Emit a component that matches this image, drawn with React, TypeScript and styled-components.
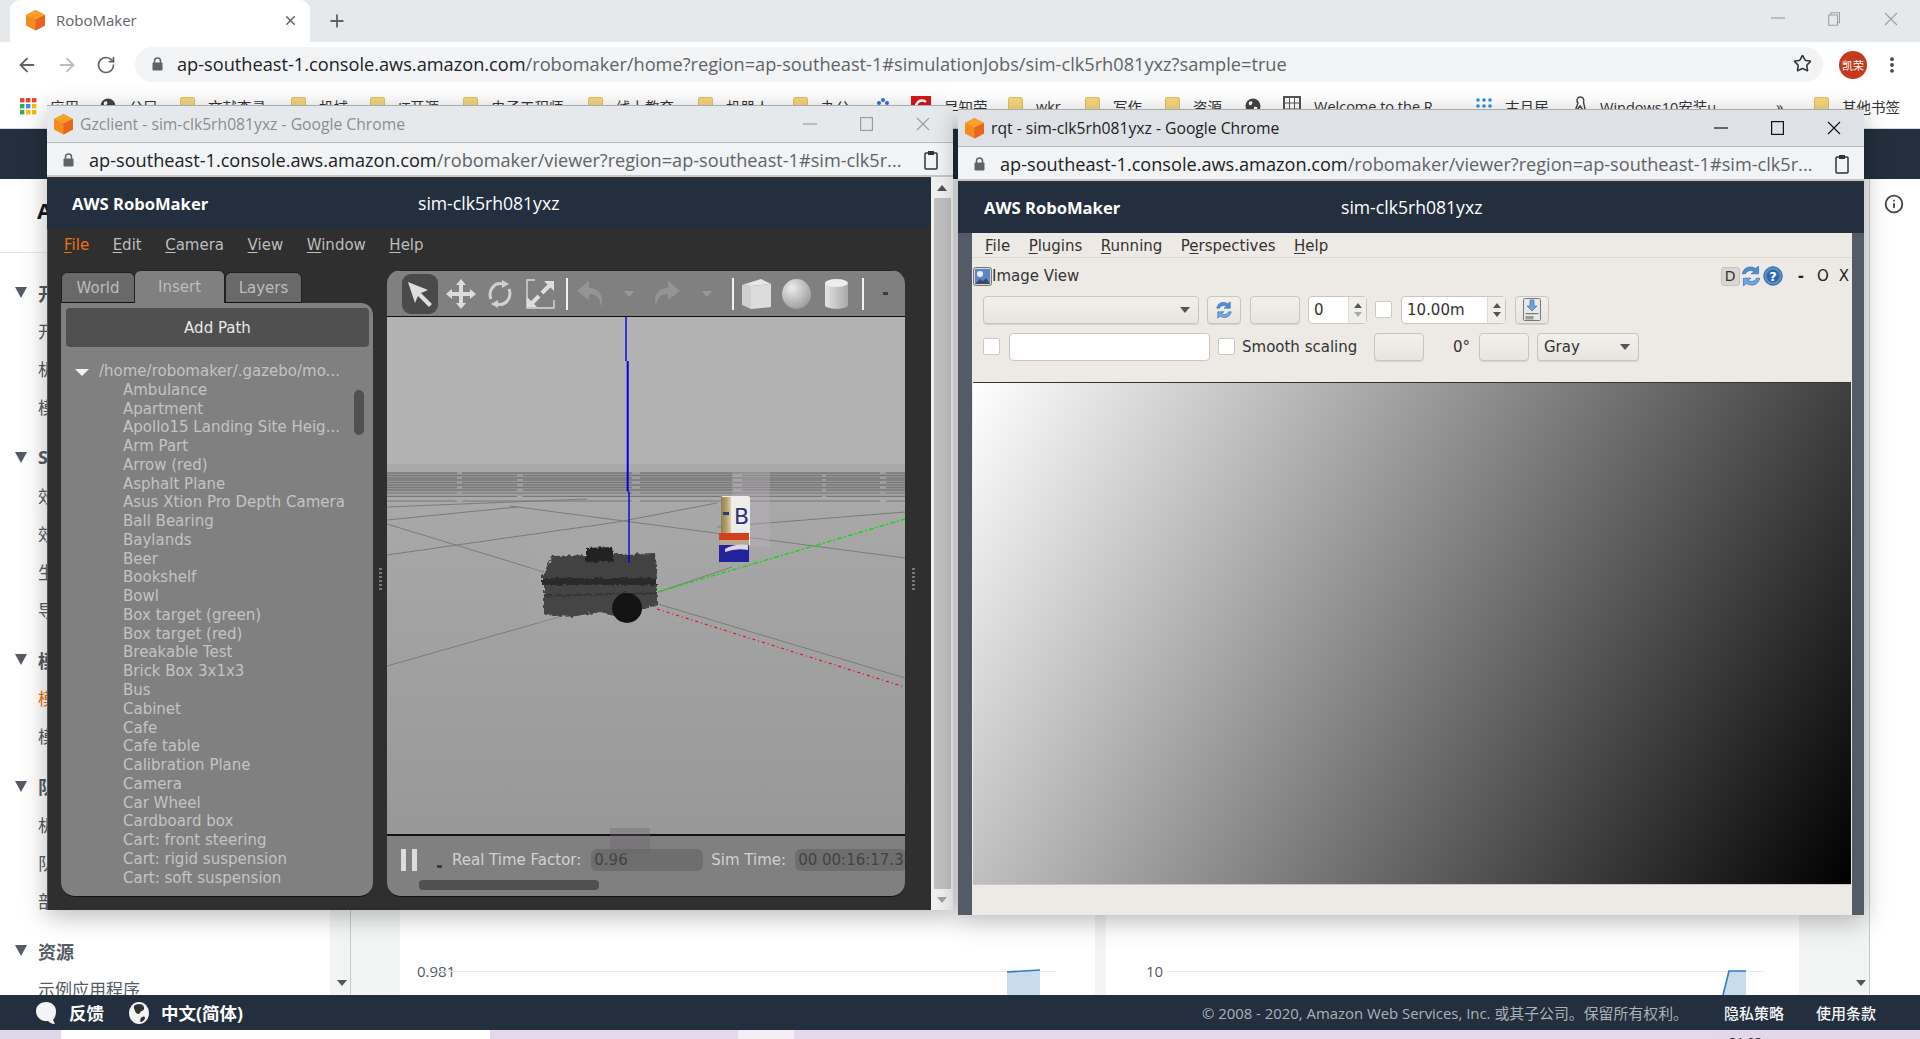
import React from "react";
import styled, { createGlobalStyle } from "styled-components";
import { ArrowLeft, ArrowRight, RotateCw, Star, Plus, X, MoreVertical, Info } from "lucide-react";

const UI = `"Open Sans", "Noto Sans CJK SC", sans-serif`;
const QT = `"DejaVu Sans", sans-serif`;

const Global = createGlobalStyle`
  html, body { margin: 0; padding: 0; background: #fff; overflow: hidden; }
  * { box-sizing: border-box; }
`;

const Screen = styled.div`
  position: relative; width: 1920px; height: 1039px; overflow: hidden;
  display: flex; flex-direction: column; font-family: ${UI};
`;

/* ---------- main browser chrome ---------- */
const TabStrip = styled.div`
  height: 42px; background: #e6e9ec; display: flex; align-items: flex-end; padding-left: 10px; flex: none;
`;
const Tab = styled.div`
  width: 300px; height: 42px; background: #fff; border-radius: 10px 10px 0 0;
  display: flex; align-items: center; padding: 0 12px 2px 15px; gap: 10px;
  font-size: 15px; color: #5f6368;
`;
const TabTitle = styled.span` flex: 1; `;
const NewTab = styled.div`
  width: 38px; height: 42px; margin-left: 8px; display: flex; align-items: center; justify-content: center; color: #5f6368;
`;
const WinControls = styled.div`
  margin-left: auto; height: 42px; display: flex; align-items: flex-start; padding-top: 12px; padding-right: 22px; gap: 43px;
  color: #9aa0a6;
`;
const Toolbar = styled.div`
  height: 45px; flex: none; background: #fff; display: flex; align-items: center; padding-left: 16px; color: #5f6368;
`;
const NavIcon = styled.div<{ $off?: boolean }>`
  width: 40px; display: flex; align-items: center; color: ${p => (p.$off ? "#b8bcc0" : "#5f6368")};
`;
const AddressPill = styled.div`
  margin-left: -1px; width: 1688px; height: 35px; border-radius: 18px; background: #f1f3f4;
  display: flex; align-items: center; padding: 0 0 2px 17px; font-size: 18.2px; color: #5f6368; position: relative;
  white-space: nowrap;
`;
const UrlHost = styled.span` color: #202124; `;
const UrlRest = styled.span` color: #5f6368; margin-left: 0; `;
const UrlBlock = styled.div` margin-left: 14px; flex: 1; `;
const PillStar = styled.div` margin-right: 11px; display: flex; `;
const Avatar = styled.div`
  width: 28px; height: 28px; margin-left: 16px; border-radius: 50%; background: #c5391c; color: #fff;
  display: flex; align-items: center; justify-content: center; font-size: 11px;
`;
const Kebab = styled.div` margin-left: 15px; display: flex; color: #444; `;
const Bookmarks = styled.div`
  height: 42px; flex: none; background: #fff; display: flex; align-items: flex-start; padding: 9px 0 0 20px;
  border-bottom: 1px solid #d9d9d9; font-size: 14.5px; color: #333; overflow: hidden;
`;
const Mark = styled.div<{ $w: number }>`
  width: ${p => p.$w}px; flex: none; display: flex; align-items: center; gap: 13px; white-space: nowrap; height: 20px;
`;

/* ---------- console beneath ---------- */
const NavBand = styled.div` height: 50px; flex: none; background: #232f3e; `;
const ConsoleBody = styled.div` height: 816px; flex: none; display: flex; background: #f2f3f3; overflow: hidden; `;
const Sidebar = styled.div` width: 330px; background: #fff; overflow: hidden; flex: none; `;
const SideHead = styled.div`
  height: 74px; border-bottom: 1px solid #e6e6e6; padding: 16px 0 0 37px; font-size: 22px; font-weight: 700; color: #16191f;
`;
const SideSection = styled.div` padding-top: 20.5px; margin-bottom: -8px; `;
const SideTitle = styled.div`
  height: 38px; display: flex; align-items: center; font-size: 18px; font-weight: 700; color: #545b64; gap: 11px; padding-left: 15px;
`;
const Caret = styled.span`
  width: 0; height: 0; border-left: 6.5px solid transparent; border-right: 6.5px solid transparent; border-top: 11px solid #545b64;
`;
const SideItem = styled.div<{ $on?: boolean }>`
  height: 38px; display: flex; align-items: center; padding-left: 38px; font-size: 17px;
  color: ${p => (p.$on ? "#ec7211" : "#545b64")}; white-space: nowrap;
`;
const Rail = styled.div<{ $w: number }>`
  width: ${p => p.$w}px; flex: none; display: flex; justify-content: flex-end; align-items: flex-end; padding: 0 3px 9px 0;
  border-right: 1px solid #c8ccd0;
`;
const RailArrow = styled.span`
  width: 0; height: 0; border-left: 5px solid transparent; border-right: 5px solid transparent; border-top: 6px solid #555;
`;
const Gap = styled.div<{ $w: number }>` width: ${p => p.$w}px; flex: none; `;
const ChartCard = styled.div<{ $w: number; $pad: number }>`
  width: ${p => p.$w}px; flex: none; background: #fff; display: flex; align-items: flex-end; padding-left: ${p => p.$pad}px;
`;
const ChartRow = styled.div` height: 33px; display: flex; align-items: flex-start; overflow: hidden; `;
const ChartLabel = styled.span<{ $w: number }>`
  width: ${p => p.$w}px; font-size: 15px; line-height: 18px; color: #545b64; flex: none; white-space: nowrap;
`;
const InfoAside = styled.div` flex: 1; background: #fff; display: flex; justify-content: center; padding: 15px 2px 0 0; color: #444; `;

const Footer = styled.div`
  height: 35px; flex: none; background: #232f3e; display: flex; align-items: center; padding: 0 44px 0 35px;
  color: #fff; font-size: 17.5px; font-weight: 700;
`;
const FootLeft = styled.span<{ $gap: number }>` margin-left: ${p => p.$gap}px; display: flex; `;
const Copy = styled.span` margin-left: auto; font-size: 14.9px; font-weight: 400; color: #aab2b8; `;
const FootLink = styled.span<{ $gap: number }>` margin-left: ${p => p.$gap}px; font-size: 15px; font-weight: 500; color: #f6f6f6; `;
const Desktop = styled.div` flex: 1; display: flex; background: #e2d8ea; overflow: hidden; `;
const DeskPiece = styled.div<{ $w: number; $c: string }>` width: ${p => p.$w}px; flex: none; background: ${p => p.$c}; `;
const DeskClock = styled.div` margin: 5px 0 0 18px; font-size: 13px; color: #222; line-height: 14px; `;

/* ---------- popup windows ---------- */
const PopWindow = styled.div<{ $x: number; $y: number; $w: number; $h: number }>`
  position: absolute; left: ${p => p.$x}px; top: ${p => p.$y}px; width: ${p => p.$w}px; height: ${p => p.$h}px;
  display: flex; flex-direction: column; box-shadow: 0 6px 24px rgba(0, 0, 0, 0.28); background: #2f2f2f;
  border-top: 1px solid #a8acb0;
`;
const PopTitle = styled.div<{ $active?: boolean }>`
  height: 37px; flex: none; display: flex; align-items: center; padding-left: 6px; gap: 6px;
  background: ${p => (p.$active ? "#dee1e6" : "#e6e9ec")}; color: ${p => (p.$active ? "#222" : "#8a8d90")};
  font-size: 15.7px; white-space: nowrap;
  border-bottom: 1px solid #b9bcbf;
`;
const PopControls = styled.div<{ $dark?: boolean }>`
  margin-left: auto; display: flex; align-items: center; gap: 43px; padding-right: 23px; color: ${p => (p.$dark ? "#111" : "#9a9da0")};
`;
const PopAddress = styled.div`
  height: 34px; flex: none; background: #f1f3f4; display: flex; align-items: center; padding: 2px 15px 0 16px;
  border-bottom: 2px solid #c4c6c8; font-size: 18.15px; color: #5f6368; white-space: nowrap;
`;
const PopUrl = styled.div` flex: 1; margin-left: 15px; overflow: hidden; `;
const PopHeader = styled.div<{ $pad: number }>`
  height: 50px; flex: none; margin-top: 2px; background: #232f3e; color: #fff; display: flex; align-items: center; padding: 0 0 2px ${p => p.$pad}px;
  font-size: 16.6px; white-space: nowrap;
`;
const HeadBrand = styled.b<{ $w: number }>` width: ${p => p.$w}px; font-weight: 700; `;
const HeadSim = styled.span` font-size: 17.6px; `;

/* gazebo */
const GzFrame = styled.div` flex: 1; display: flex; min-height: 0; `;
const GzMain = styled.div` flex: 1; display: flex; flex-direction: column; min-width: 0; margin-top: 0; `;
const GzContent = styled.div` flex: 1; display: flex; flex-direction: column; background: #2f2f2f; min-height: 0; border-left: 1px solid #555; `;
const GzMenu = styled.div`
  height: 31px; flex: none; display: flex; align-items: center; gap: 23.5px; padding-left: 16px;
  font: 15px ${QT}; color: #bdbdbd;
`;
const MenuEntry = styled.span<{ $hot?: boolean }>` color: ${p => (p.$hot ? "#ec7211" : "inherit")}; `;
const Mn = styled.u` text-underline-offset: 2px; text-decoration-thickness: 1px; `;
const GzPanes = styled.div` display: flex; height: 627px; margin-top: 10px; padding-left: 13px; `;
const LeftPane = styled.div` width: 312px; flex: none; display: flex; flex-direction: column; `;
const TabRow = styled.div` display: flex; height: 33px; align-items: flex-end; flex: none; `;
const GzTab = styled.div<{ $w: number; $on?: boolean }>`
  width: ${p => p.$w}px; height: ${p => (p.$on ? 33 : 31)}px; display: flex; align-items: center; justify-content: center;
  background: ${p => (p.$on ? "#808080" : "#696969")}; border-radius: 6px 6px 0 0;
  border: 1px solid #202020; border-bottom: ${p => (p.$on ? "0" : "1px solid #111")}; border-left-width: ${p => (p.$on ? 0 : 1)}px;
  font: 15px ${QT}; color: #bdbdbd;
`;
const InsertPanel = styled.div`
  position: relative; flex: 1; background: #808080; border-radius: 0 12px 14px 14px; border-bottom: 1px solid #111; padding: 5px 4px 0 5px;
  overflow: hidden; font: 15px ${QT};
`;
const AddPath = styled.div`
  height: 39px; background: #505050; border-radius: 4px; color: #e8e8e8; display: flex; align-items: center; justify-content: center;
`;
const TreeRoot = styled.div`
  margin-top: 15px; height: 18.77px; line-height: 18.77px; padding-left: 9px; display: flex; align-items: center; gap: 10px; color: #c4c4c4;
  white-space: nowrap;
`;
const TreeCaret = styled.span`
  width: 0; height: 0; border-left: 7px solid transparent; border-right: 7px solid transparent; border-top: 7px solid #f2f2f2; margin-top: 3px;
`;
const TreeItem = styled.div` height: 18.77px; line-height: 18.77px; padding-left: 57px; color: #c4c4c4; white-space: nowrap; `;
const TreeThumb = styled.div`
  position: absolute; left: 293px; top: 87px; width: 10px; height: 45px; border-radius: 5px; background: #505050;
`;
const Grip = styled.div<{ $w: number }>`
  width: ${p => p.$w}px; flex: none; display: flex; align-items: center; justify-content: center;
  padding-bottom: 10px;
`;
const GripDots = styled.div`
  width: 3px; height: 22px; background: repeating-linear-gradient(to bottom, #777 0 2px, transparent 2px 4px);
`;
const ViewPane = styled.div`
  position: relative; width: 518px; flex: none; display: flex; flex-direction: column; background: #808080; border-radius: 14px 14px 14px 14px;
  overflow: hidden; border-bottom: 1px solid #111;
`;
const ToolBar3d = styled.div`
  height: 47px; flex: none; display: flex; align-items: center; padding-left: 15px; border-bottom: 1px solid #111; border-top: 1px solid #222;
`;
const Tool = styled.div<{ $ml?: number; $on?: boolean; $w: number }>`
  width: ${p => p.$w}px; height: ${p => (p.$on ? 40 : 30)}px; margin-left: ${p => p.$ml ?? 0}px; flex: none;
  display: flex; align-items: center; justify-content: center;
  background: ${p => (p.$on ? "#4a4a4a" : "transparent")}; border-radius: 9px;
`;
const ToolSep = styled.div<{ $ml: number }>` width: 2px; height: 32px; margin-left: ${p => p.$ml}px; background: #f2f2f2; flex: none; `;
const SceneBox = styled.div` height: 517px; flex: none; display: flex; `;
const TimeBar = styled.div`
  position: relative; flex: 1; border-top: 2px solid #111; display: flex; flex-direction: column; font: 15px ${QT}; color: #d2d2d2;
`;
const TimeRow = styled.div` height: 22px; margin-top: 13px; display: flex; align-items: center; padding-left: 14px; white-space: nowrap; overflow: hidden; `;
const Pause = styled.div`
  width: 16px; height: 22px; flex: none; border-left: 5px solid #dcdcdc; border-right: 5px solid #dcdcdc;
`;
const TinyDot = styled.span` width: 5px; height: 3px; background: #3c3c3c; margin: 12px 10px 0 20px; flex: none; `;
const TinyTool = styled.span` width: 5px; height: 3px; background: #3c3c3c; flex: none; `;
const TimeField = styled.div<{ $w: number; $ml: number }>`
  width: ${p => p.$w}px; height: 22px; flex: none; margin-left: ${p => p.$ml}px; margin-right: 8px; background: #6e6e6e; border-radius: 6px;
  color: #424242; padding-left: 3px; line-height: 22px; overflow: hidden;
`;
const HScroll = styled.div` width: 180px; height: 10px; margin: 9px 0 0 32px; background: #505050; border-radius: 4px; flex: none; `;
const Ghost = styled.div`
  position: absolute; left: 223px; top: -8px; width: 40px; height: 26px; background: rgba(110, 100, 110, 0.35);
`;
const ChromeScroll = styled.div` width: 22px; flex: none; background: #f1f1f1; display: flex; flex-direction: column; align-items: center; `;
const ScrollBtn = styled.div` height: 21px; display: flex; align-items: center; justify-content: center; flex: none; `;
const ScrollThumb = styled.div` flex: 1; width: 17px; background: #c1c1c1; `;
const ArrowUp = styled.span`
  width: 0; height: 0; border-left: 5px solid transparent; border-right: 5px solid transparent; border-bottom: 6px solid #505050;
`;
const ArrowDown = styled.span`
  width: 0; height: 0; border-left: 5px solid transparent; border-right: 5px solid transparent; border-top: 6px solid #a3a3a3;
`;

/* rqt */
const RqtFrame = styled.div` flex: 1; display: flex; padding: 0 12px 0 14px; background: #555b66; min-height: 0; `;
const RqtInner = styled.div` flex: 1; background: #edeae5; display: flex; flex-direction: column; font: 15px ${QT}; color: #333; `;
const RqtMenu = styled.div`
  height: 25px; flex: none; display: flex; align-items: center; gap: 18.5px; padding: 2px 0 0 13px; border-bottom: 1px solid #dcd8d2;
`;
const DockTitle = styled.div` height: 36px; flex: none; display: flex; align-items: center; padding: 0 3px 0 1px; color: #333; `;
const DockLabel = styled.span` margin-left: 0; `;
const DockTools = styled.div` margin-left: auto; display: flex; align-items: center; `;
const DButton = styled.div`
  width: 19px; height: 19px; background: #d9d6d1; border: 1px solid #c5c2bd; border-radius: 3px; display: flex; align-items: center; justify-content: center;
  font-size: 14px;
`;
const DockGlyph = styled.span<{ $ml: number; $bold?: boolean }>` margin-left: ${p => p.$ml}px; font-size: 15px; font-weight: ${p => (p.$bold ? 700 : 400)}; color: #222; `;
const CtlRow = styled.div<{ $mt: number }>` height: 29px; flex: none; margin-top: ${p => p.$mt}px; display: flex; align-items: center; padding-left: 11px; `;
const QtButton = styled.div<{ $w: number; $ml?: number }>`
  width: ${p => p.$w}px; height: 28px; margin-left: ${p => p.$ml ?? 0}px; flex: none; display: flex; align-items: center; justify-content: space-between;
  border: 1px solid #c9c6c0; border-radius: 4px; background: linear-gradient(#f2f0ec, #e8e5e0); padding: 0 8px 0 6px; box-shadow: 0 1px 0 #d5d2cc;
`;
const QtIconBtn = styled(QtButton)` justify-content: center; padding: 0; `;
const ComboCaret = styled.span`
  width: 0; height: 0; border-left: 5px solid transparent; border-right: 5px solid transparent; border-top: 6px solid #555; margin-left: auto;
`;
const SpinBox = styled.div<{ $w: number; $ml: number; $arrow: number }>`
  width: ${p => p.$w}px; height: 28px; margin-left: ${p => p.$ml}px; flex: none; display: grid; grid-template-columns: 1fr ${p => p.$arrow}px;
  border: 1px solid #c9c6c0; border-radius: 4px; background: #fff; align-items: center;
`;
const SpinValue = styled.span` padding-left: 5px; border-right: 1px solid #dedbd6; height: 100%; display: flex; align-items: center; `;
const SpinArrows = styled.div` display: flex; flex-direction: column; align-items: center; gap: 4px; background: #f0eee9; height: 100%; justify-content: center; `;
const SpinUp = styled.span<{ $dim?: boolean }>`
  width: 0; height: 0; border-left: 4.5px solid transparent; border-right: 4.5px solid transparent;
  border-bottom: 5px solid ${p => (p.$dim ? "#999" : "#555")};
`;
const SpinDown = styled.span<{ $dim?: boolean }>`
  width: 0; height: 0; border-left: 4.5px solid transparent; border-right: 4.5px solid transparent;
  border-top: 5px solid ${p => (p.$dim ? "#aaa" : "#555")};
`;
const Check = styled.div<{ $ml?: number }>`
  width: 17px; height: 17px; margin-left: ${p => p.$ml ?? 0}px; flex: none; background: #fff; border: 1px solid #cbc8c2; border-radius: 2px;
`;
const LineInput = styled.div<{ $w: number; $ml: number }>`
  width: ${p => p.$w}px; height: 28px; margin-left: ${p => p.$ml}px; flex: none; background: #fff; border: 1px solid #c9c6c0; border-radius: 4px;
`;
const QtLabel = styled.span<{ $ml: number; $w?: number }>` margin-left: ${p => p.$ml}px; white-space: nowrap; flex: none; ${p => (p.$w ? `width:${p.$w}px;` : "")} `;
const ImageArea = styled.div`
  margin-top: 21px; height: 503px; flex: none; margin-left: 1px; margin-right: 1px; border-top: 1px solid #333;
  background: linear-gradient(120deg, #fff 0%, #000 100%); border-bottom: 1px solid #c9c6c0;
`;

/* ---------- drawings ---------- */
const Cube = () => (
  <svg width="21" height="22" viewBox="0 0 21 22" style={{ flex: "none" }}>
    <polygon points="10.5,1 20,6 20,16.5 10.5,21.5 1,16.5 1,6" fill="#f58a1f" />
    <polygon points="10.5,1 20,6 10.5,10.5 1,6" fill="#f9a02c" />
    <polygon points="10.5,10.5 20,6 20,16.5 10.5,21.5" fill="#e86421" />
  </svg>
);
const Lock = () => (
  <svg width="11" height="14" viewBox="0 0 11 14" style={{ flex: "none" }}>
    <path d="M2.5 6V4a3 3 0 0 1 6 0v2" fill="none" stroke="#5f6368" strokeWidth="1.5" />
    <rect x="0.5" y="5.5" width="10" height="8" rx="1" fill="#5f6368" />
  </svg>
);
const Clip = () => (
  <svg width="14" height="20" viewBox="0 0 14 20" style={{ flex: "none" }}>
    <rect x="1" y="3" width="12" height="16" rx="1" fill="none" stroke="#333" strokeWidth="1.5" />
    <rect x="4" y="1" width="6" height="4" fill="#333" />
  </svg>
);
const WinMin = () => <svg width="14" height="12" viewBox="0 0 14 12"><path d="M0 6h14" stroke="currentColor" strokeWidth="1.2" /></svg>;
const WinMax = () => <svg width="13" height="14" viewBox="0 0 13 14"><rect x=".6" y=".6" width="11.8" height="12.8" fill="none" stroke="currentColor" strokeWidth="1.2" /></svg>;
const WinClose = () => <svg width="14" height="14" viewBox="0 0 14 14"><path d="M1 1l12 12M13 1L1 13" stroke="currentColor" strokeWidth="1.1" /></svg>;
const WinRestore = () => <svg width="13" height="14" viewBox="0 0 13 14"><path d="M3 3V.7h8.5v10H9.5M.7 3h8.8v10.3H.7z" fill="none" stroke="currentColor" strokeWidth="1.1" /></svg>;
const Folder = () => <svg width="15" height="18" viewBox="0 0 15 18" style={{ flex: "none" }}><rect x=".5" y=".5" width="14" height="17" rx="1.5" fill="#f5d77e" stroke="#e0c060" /></svg>;
const Globe = () => <svg width="16" height="16" viewBox="0 0 16 16" style={{ flex: "none" }}><circle cx="8" cy="8" r="7.5" fill="#444" /><path d="M4 4c3-2 4 0 3 2S3 8 4 4zM9 9c3-1 4 0 3 3s-4 2-3-3z" fill="#fff" /></svg>;
const AppsGrid = () => (
  <svg width="17" height="17" viewBox="0 0 17 17" style={{ flex: "none" }}>
    {["#ea4335", "#ea4335", "#ea4335", "#34a853", "#4285f4", "#fbbc05", "#34a853", "#fbbc05", "#fbbc05"].map((c, i) => (
      <rect key={i} x={(i % 3) * 6} y={Math.floor(i / 3) * 6} width="4.4" height="4.4" fill={c} />
    ))}
  </svg>
);
const Paw = () => <svg width="18" height="18" viewBox="0 0 18 18"><g fill="#2f6fdf"><circle cx="5" cy="6" r="2" /><circle cx="13" cy="6" r="2" /><circle cx="9" cy="3" r="2" /><ellipse cx="9" cy="12" rx="5" ry="4" /></g></svg>;
const RedC = () => <svg width="20" height="20" viewBox="0 0 20 20"><rect width="20" height="20" fill="#d8161b" /><path d="M15 6a6 6 0 1 0 0 9" fill="none" stroke="#fff" strokeWidth="2.6" /></svg>;
const DocIcon = () => <svg width="18" height="20" viewBox="0 0 18 20"><rect x="1" y="1" width="16" height="18" fill="#fff" stroke="#555" strokeWidth="2" /><path d="M6.5 1v18M11.5 1v18M1 7h16M1 13h16" stroke="#555" /></svg>;
const DotsIcon = () => <svg width="16" height="18" viewBox="0 0 16 18"><g fill="#2a8fe0">{[2, 8, 14].map(x => [3, 9, 15].map(y => <circle key={`${x}${y}`} cx={x} cy={y} r="1.8" />))}</g></svg>;
const BirdIcon = () => <svg width="15" height="20" viewBox="0 0 15 20"><path d="M8 1a3.5 3.5 0 0 1 3.5 5L14 18 8 10l-6 8 4-11A3.5 3.5 0 0 1 8 1z" fill="none" stroke="#444" strokeWidth="1.4" /></svg>;

const CursorIcon = () => <svg width="28" height="28" viewBox="0 0 28 28"><polygon points="2,2 22,10 15,13 26,24 23,27 12,16 9,23" fill="#dedede" /></svg>;
const MoveIcon = () => (
  <svg width="30" height="30" viewBox="0 0 30 30" fill="#dcdcdc">
    <path d="M15 0l5 6h-3v7h7v-3l6 5-6 5v-3h-7v7h3l-5 6-5-6h3v-7H6v3l-6-5 6-5v3h7V6h-3z" />
  </svg>
);
const RotateIcon = () => (
  <svg width="26" height="30" viewBox="0 0 26 30" fill="none" stroke="#d0d0d0" strokeWidth="3">
    <path d="M4 20A10 11 0 0 1 16 5" />
    <path d="M22 10A10 11 0 0 1 10 25" />
    <polygon points="15,1 22,5 15,9" fill="#d0d0d0" stroke="none" />
    <polygon points="11,21 4,25 11,29" fill="#d0d0d0" stroke="none" />
  </svg>
);
const ScaleIcon = () => (
  <svg width="29" height="30" viewBox="0 0 29 30" fill="none">
    <path d="M9 1H1v28h27V21" stroke="#d8d8d8" strokeWidth="1.4" />
    <path d="M4 26L13 17M16 14L25 5" stroke="#dedede" strokeWidth="4" />
    <polygon points="18,2 28,2 28,12" fill="#dedede" />
    <polygon points="1,18 1,28 11,28" fill="#dedede" />
  </svg>
);
const UndoIcon = ({ flip }: { flip?: boolean }) => (
  <svg width="29" height="28" viewBox="0 0 29 28" style={flip ? { transform: "scaleX(-1)" } : undefined}>
    <path d="M13 1L1 11l12 9v-6c7 0 11 3 12 13 3-10-1-19-12-19z" fill="#959595" />
  </svg>
);
const SmallDrop = () => <svg width="10" height="6" viewBox="0 0 10 6"><polygon points="0,0 10,0 5,6" fill="#9a9a9a" /></svg>;
const BoxIcon = () => (
  <svg width="29" height="30" viewBox="0 0 29 30">
    <polygon points="0,6 9,7 9,30 0,26" fill="#cfcfcf" />
    <polygon points="9,7 29,5 29,28 9,30" fill="#dcdcdc" />
    <polygon points="0,6 19,0 29,5 9,7" fill="#e6e6e6" />
  </svg>
);
const SphereIcon = () => (
  <svg width="29" height="30" viewBox="0 0 29 30">
    <defs><radialGradient id="sph" cx="35%" cy="30%" r="75%"><stop offset="0" stopColor="#ececec" /><stop offset="1" stopColor="#9c9c9c" /></radialGradient></defs>
    <ellipse cx="14.5" cy="15" rx="14.5" ry="15" fill="url(#sph)" />
  </svg>
);
const CylIcon = () => (
  <svg width="23" height="30" viewBox="0 0 23 30">
    <defs><linearGradient id="cyl"><stop offset="0" stopColor="#e4e4e4" /><stop offset="1" stopColor="#a8a8a8" /></linearGradient></defs>
    <path d="M0 4v22c0 5 23 5 23 0V4z" fill="url(#cyl)" />
    <ellipse cx="11.5" cy="4" rx="11.5" ry="4" fill="#ededed" />
  </svg>
);
const Refresh = ({ s = 20 }: { s?: number }) => (
  <svg width={s} height={s + 4} viewBox="0 0 20 24" fill="none">
    <path d="M2 10C3 4 9 2 14 5l3-2v7h-7l3-2C10 6 6 7 5 10z" fill="#4a8fd8" stroke="#2d65ad" strokeWidth=".6" />
    <path d="M18 14c-1 6-7 8-12 5l-3 2v-7h7l-3 2c3 2 7 1 8-2z" fill="#6aa9e6" stroke="#2d65ad" strokeWidth=".6" />
  </svg>
);
const SaveIcon = () => (
  <svg width="18" height="23" viewBox="0 0 18 23">
    <rect x=".5" y=".5" width="17" height="22" rx="1" fill="#e8e8e8" stroke="#777" />
    <path d="M7 2h4v6h3l-5 5-5-5h3z" fill="#6aa4dc" stroke="#2d65ad" strokeWidth=".6" />
    <rect x="2.5" y="15" width="13" height="1.2" fill="#777" />
    <rect x="2.5" y="18" width="8" height="3.5" fill="#9a9a9a" />
  </svg>
);
const ImgIcon = () => (
  <svg width="19" height="19" viewBox="0 0 19 19" style={{ flex: "none" }}>
    <rect x=".5" y=".5" width="18" height="18" rx="2" fill="#d9d6d1" stroke="#777" />
    <rect x="2" y="2" width="15" height="15" fill="#5a88c6" />
    <circle cx="7" cy="7" r="3" fill="#e8eef7" />
    <path d="M2 17l5-5 3 2 3-3 4 6z" fill="#3a4a66" />
  </svg>
);
const HelpIcon = () => (
  <svg width="20" height="20" viewBox="0 0 20 20" style={{ marginLeft: 1 }}>
    <circle cx="10" cy="10" r="9.2" fill="#5a8ec8" stroke="#2c5f9e" />
    <circle cx="10" cy="10" r="6.5" fill="#2f68ad" />
    <text x="10" y="15" textAnchor="middle" fontSize="13" fontWeight="700" fill="#fff" fontFamily="DejaVu Sans">?</text>
  </svg>
);
const Bubble = () => <svg width="22" height="24" viewBox="0 0 22 24"><path d="M11 1c6 0 10 4 10 9 0 4-1 7-3 9l2 4c-3 0-5-1-7-3-7 1-12-4-12-10C1 5 5 1 11 1z" fill="#f4f4f4" /></svg>;
const FootGlobe = () => <svg width="20" height="22" viewBox="0 0 20 22"><ellipse cx="10" cy="11" rx="10" ry="11" fill="#f4f4f4" /><path d="M6 3c4-2 8-1 9 2 1 4-3 3-4 6-1 2-4 1-5-2S4 5 6 3zM12 16c2-2 4-2 4 0s-3 4-4 4-1-3 0-4z" fill="#333" /></svg>;

const Scene = () => {
  const far = [156, 158.5, 161, 163, 165.5, 168, 170.5, 173, 176, 179.5, 184];
  return (
    <svg width="518" height="517" viewBox="0 0 518 517">
      <defs>
        <linearGradient id="ground" x1="0" y1="0" x2="0" y2="1"><stop offset="0" stopColor="#aaaaaa" /><stop offset="1" stopColor="#989898" /></linearGradient>
        <linearGradient id="canTop" x1="0" y1="0" x2="1" y2="0"><stop offset="0" stopColor="#8f7f50" /><stop offset=".6" stopColor="#b8a66e" /><stop offset="1" stopColor="#d9d2b8" /></linearGradient>
        <filter id="rough" x="-10%" y="-10%" width="120%" height="120%">
          <feTurbulence type="fractalNoise" baseFrequency="0.25" numOctaves="2" seed="4" />
          <feDisplacementMap in="SourceGraphic" scale="5" />
        </filter>
        <filter id="soft" x="-10%" y="-10%" width="120%" height="120%">
          <feTurbulence type="fractalNoise" baseFrequency="0.3" numOctaves="1" seed="7" />
          <feDisplacementMap in="SourceGraphic" scale="2" />
        </filter>
      </defs>
      <rect width="518" height="148" fill="#b2b2b2" />
      <rect y="147" width="518" height="370" fill="url(#ground)" />
      <rect y="147" width="518" height="9" fill="#a9a9a9" />
      <rect y="155" width="518" height="24" fill="#9e9e9e" />
      {far.map((y, i) => (
        <line key={y} x1="0" x2="518" y1={y} y2={y} stroke="#787878" strokeWidth={i < 8 ? 1.3 : 1} strokeDasharray={i % 2 ? "130 6 210 9 80 4" : "70 5 170 8 240 6"} />
      ))}
      <g stroke="#7b7b7b" strokeWidth="1" fill="none">
        <path d="M0 207L157 255" />
        <path d="M0 238L231 205L330 186" />
        <path d="M0 349L172 300" />
        <path d="M123 189L518 241" />
        <path d="M0 190L200 182M0 203L130 190" />
        <path d="M271 287L518 361" />
        <path d="M271 275L345 250" />
        <path d="M330 210L518 195" />
      </g>
      <rect x="143" y="231" width="130" height="75" fill="#b0aeb0" opacity=".18" />
      <rect x="345" y="155" width="38" height="75" fill="#bdb5bd" opacity=".3" />
      <line x1="271" y1="275" x2="518" y2="202" stroke="#12d812" strokeWidth="1.4" strokeDasharray="5 2 2 2" />
      <line x1="270" y1="292" x2="518" y2="370" stroke="#e8102a" strokeWidth="1.3" strokeDasharray="3 3 1 3" />
      <g filter="url(#rough)">
        <polygon points="166,239 268,236 270,262 155,264 155,258" fill="#424242" />
        <polygon points="157,268 270,266 270,287 253,294 236,300 213,295 183,300 157,297" fill="#454545" />
        <rect x="155" y="261" width="115" height="7" fill="#2c2c2c" />
        <path d="M157 279L270 276" stroke="#333" strokeWidth="1.5" />
        <polygon points="199,231 225,230 227,244 199,245" fill="#222" />
      </g>
      <ellipse cx="240" cy="291" rx="15" ry="15" fill="#141414" />
      <path d="M239 0V44" stroke="#0000e6" strokeWidth="1.4" />
      <path d="M240.7 44V174.5" stroke="#0000e6" strokeWidth="2" />
      <path d="M242 174.5V246" stroke="#0000e6" strokeWidth="1.4" />
      <g filter="url(#soft)">
        <rect x="334" y="179" width="29" height="50" rx="2" fill="#efecec" />
        <rect x="334" y="180" width="10" height="37" fill="url(#canTop)" />
        <rect x="336" y="195" width="6" height="3" fill="#303a70" />
        <rect x="332" y="216" width="30" height="7" fill="#d4401c" />
        <rect x="333" y="223" width="29" height="5" fill="#b6a890" />
        <rect x="332" y="228" width="30" height="17" fill="#23249a" />
        <path d="M338 232q10 -6 23 -4v5q-12 -2 -23 2z" fill="#d8d8e8" />
      </g>
      <text x="347" y="207" fontSize="22" fontFamily="DejaVu Sans" fill="#2e2e7e">B</text>
    </svg>
  );
};

const ITEMS = [
  "Ambulance", "Apartment", "Apollo15 Landing Site Heig...", "Arm Part", "Arrow (red)", "Asphalt Plane", "Asus Xtion Pro Depth Camera",
  "Ball Bearing", "Baylands", "Beer", "Bookshelf", "Bowl", "Box target (green)", "Box target (red)", "Breakable Test", "Brick Box 3x1x3",
  "Bus", "Cabinet", "Cafe", "Cafe table", "Calibration Plane", "Camera", "Car Wheel", "Cardboard box", "Cart: front steering",
  "Cart: rigid suspension", "Cart: soft suspension",
];

const MARKS: { w: number; icon?: React.ReactNode; text?: string }[] = [
  { w: 80, icon: <AppsGrid />, text: "应用" },
  { w: 80, icon: <Globe />, text: "公民" },
  { w: 111, icon: <Folder />, text: "文献查寻" },
  { w: 79, icon: <Folder />, text: "机械" },
  { w: 93, icon: <Folder />, text: "IT开源" },
  { w: 125, icon: <Folder />, text: "电子工程师" },
  { w: 110, icon: <Folder />, text: "线上教育" },
  { w: 95, icon: <Folder />, text: "机器人" },
  { w: 81, icon: <Folder />, text: "办公" },
  { w: 37, icon: <Paw /> },
  { w: 97, icon: <RedC />, text: "早知荣" },
  { w: 77, icon: <Folder />, text: "wkr" },
  { w: 80, icon: <Folder />, text: "写作" },
  { w: 80, icon: <Folder />, text: "资源" },
  { w: 38, icon: <Globe /> },
  { w: 193, icon: <DocIcon />, text: "Welcome to the R" },
  { w: 96, icon: <DotsIcon />, text: "古月居" },
  { w: 204, icon: <BirdIcon />, text: "Windows10安装u" },
  { w: 38, text: "»" },
  { w: 100, icon: <Folder />, text: "其他书签" },
];

const SECTIONS: { title: string; items: string[]; on?: number }[] = [
  { title: "开发", items: ["开发环境", "机器人应用程序", "模拟应用程序"] },
  { title: "Simulations", items: ["效率模拟作业", "效率模拟批次", "生成世界", "导入作业"] },
  { title: "模拟", items: ["模拟作业", "模拟作业批次"], on: 0 },
  { title: "队组管理", items: ["机器人", "队组", "部署"] },
  { title: "资源", items: ["示例应用程序"] },
];

const Url = ({ path }: { path: string }) => (
  <>
    <UrlHost>ap-southeast-1.console.aws.amazon.com</UrlHost>
    <UrlRest>{path}</UrlRest>
  </>
);

export default function App() {
  return (
    <Screen>
      <Global />
      <TabStrip>
        <Tab>
          <Cube />
          <TabTitle>RoboMaker</TabTitle>
          <X size={15} strokeWidth={2.4} />
        </Tab>
        <NewTab><Plus size={20} strokeWidth={2.2} /></NewTab>
        <WinControls>
          <WinMin />
          <WinRestore />
          <WinClose />
        </WinControls>
      </TabStrip>
      <Toolbar>
        <NavIcon><ArrowLeft size={22} /></NavIcon>
        <NavIcon $off><ArrowRight size={22} /></NavIcon>
        <NavIcon><RotateCw size={20} /></NavIcon>
        <AddressPill>
          <Lock />
          <UrlBlock><Url path="/robomaker/home?region=ap-southeast-1#simulationJobs/sim-clk5rh081yxz?sample=true" /></UrlBlock>
          <PillStar><Star size={19} color="#333" /></PillStar>
        </AddressPill>
        <Avatar>凯荣</Avatar>
        <Kebab><MoreVertical size={20} strokeWidth={2.6} /></Kebab>
      </Toolbar>
      <Bookmarks>
        {MARKS.map((m, i) => (
          <Mark key={i} $w={m.w}>{m.icon}{m.text}</Mark>
        ))}
      </Bookmarks>
      <NavBand />
      <ConsoleBody>
        <Sidebar>
          <SideHead>AWS RoboMaker</SideHead>
          {SECTIONS.map(s => (
            <SideSection key={s.title}>
              <SideTitle><Caret />{s.title}</SideTitle>
              {s.items.map((it, i) => <SideItem key={it} $on={s.on === i}>{it}</SideItem>)}
            </SideSection>
          ))}
        </Sidebar>
        <Rail $w={21}><RailArrow /></Rail>
        <Gap $w={49} />
        <ChartCard $w={695} $pad={17}>
          <ChartRow>
            <ChartLabel $w={23}>0.981</ChartLabel>
            <svg width="616" height="33" viewBox="0 0 616 33">
              <line x1="0" x2="616" y1="9.5" y2="9.5" stroke="#e6e8ea" />
              <polygon points="567,10 600,8 600,33 567,33" fill="#c9dcec" />
              <line x1="567" y1="10" x2="600" y2="8" stroke="#2b7cc0" strokeWidth="1.6" />
            </svg>
          </ChartRow>
        </ChartCard>
        <Gap $w={11} />
        <ChartCard $w={693} $pad={40}>
          <ChartRow>
            <ChartLabel $w={21}>10</ChartLabel>
            <svg width="596" height="33" viewBox="0 0 596 33">
              <line x1="0" x2="596" y1="9.5" y2="9.5" stroke="#e6e8ea" />
              <polygon points="556,33 562,9 579,9 579,33" fill="#c9dcec" />
              <path d="M556 33L562 9H579" fill="none" stroke="#2b7cc0" strokeWidth="1.6" />
            </svg>
          </ChartRow>
        </ChartCard>
        <Rail $w={71}><RailArrow /></Rail>
        <InfoAside><Info size={20} strokeWidth={2.2} /></InfoAside>
      </ConsoleBody>
      <Footer>
        <Bubble />
        <FootLeft $gap={12}>反馈</FootLeft>
        <FootLeft $gap={25}><FootGlobe /></FootLeft>
        <FootLeft $gap={12}>中文(简体)</FootLeft>
        <Copy>© 2008 - 2020, Amazon Web Services, Inc. 或其子公司。保留所有权利。</Copy>
        <FootLink $gap={36}>隐私策略</FootLink>
        <FootLink $gap={32}>使用条款</FootLink>
      </Footer>
      <Desktop>
        <DeskPiece $w={61} $c="#dcd7e9" />
        <DeskPiece $w={429} $c="#ffffff" />
        <DeskPiece $w={248} $c="#e5d8ec" />
        <DeskPiece $w={56} $c="#f3eef6" />
        <DeskPiece $w={917} $c="#e4d8ea" />
        <DeskClock>21:03</DeskClock>
      </Desktop>

      <PopWindow $x={47} $y={105} $w={906} $h={805}>
        <PopTitle>
          <Cube />
          Gzclient - sim-clk5rh081yxz - Google Chrome
          <PopControls><WinMin /><WinMax /><WinClose /></PopControls>
        </PopTitle>
        <PopAddress>
          <Lock />
          <PopUrl><Url path="/robomaker/viewer?region=ap-southeast-1#sim-clk5r..." /></PopUrl>
          <Clip />
        </PopAddress>
        <GzFrame>
          <GzMain>
            <PopHeader $pad={25}>
              <HeadBrand $w={346}>AWS RoboMaker</HeadBrand>
              <HeadSim>sim-clk5rh081yxz</HeadSim>
            </PopHeader>
            <GzContent>
              <GzMenu>
                <MenuEntry $hot><Mn>F</Mn>ile</MenuEntry>
                <MenuEntry><Mn>E</Mn>dit</MenuEntry>
                <MenuEntry><Mn>C</Mn>amera</MenuEntry>
                <MenuEntry><Mn>V</Mn>iew</MenuEntry>
                <MenuEntry><Mn>W</Mn>indow</MenuEntry>
                <MenuEntry><Mn>H</Mn>elp</MenuEntry>
              </GzMenu>
              <GzPanes>
                <LeftPane>
                  <TabRow>
                    <GzTab $w={74}>World</GzTab>
                    <GzTab $w={90} $on>Insert</GzTab>
                    <GzTab $w={77}>Layers</GzTab>
                  </TabRow>
                  <InsertPanel>
                    <AddPath>Add Path</AddPath>
                    <TreeRoot><TreeCaret />/home/robomaker/.gazebo/mo...</TreeRoot>
                    {ITEMS.map(it => <TreeItem key={it}>{it}</TreeItem>)}
                    <TreeThumb />
                  </InsertPanel>
                </LeftPane>
                <Grip $w={14}><GripDots /></Grip>
                <ViewPane>
                  <ToolBar3d>
                    <Tool $w={36} $on><CursorIcon /></Tool>
                    <Tool $w={30} $ml={8}><MoveIcon /></Tool>
                    <Tool $w={26} $ml={11}><RotateIcon /></Tool>
                    <Tool $w={29} $ml={13}><ScaleIcon /></Tool>
                    <ToolSep $ml={11} />
                    <Tool $w={29} $ml={8}><UndoIcon /></Tool>
                    <Tool $w={10} $ml={19}><SmallDrop /></Tool>
                    <Tool $w={29} $ml={18}><UndoIcon flip /></Tool>
                    <Tool $w={10} $ml={21}><SmallDrop /></Tool>
                    <ToolSep $ml={20} />
                    <Tool $w={29} $ml={8}><BoxIcon /></Tool>
                    <Tool $w={29} $ml={11}><SphereIcon /></Tool>
                    <Tool $w={23} $ml={14}><CylIcon /></Tool>
                    <ToolSep $ml={14} />
                    <Tool $w={5} $ml={19}><TinyTool /></Tool>
                  </ToolBar3d>
                  <SceneBox><Scene /></SceneBox>
                  <TimeBar>
                    <Ghost />
                    <TimeRow>
                      <Pause />
                      <TinyDot />
                      Real Time Factor:
                      <TimeField $w={112} $ml={10}>0.96</TimeField>
                      Sim Time:
                      <TimeField $w={112} $ml={9}>00 00:16:17.3</TimeField>
                    </TimeRow>
                    <HScroll />
                  </TimeBar>
                </ViewPane>
                <Grip $w={16}><GripDots /></Grip>
              </GzPanes>
            </GzContent>
          </GzMain>
          <ChromeScroll>
            <ScrollBtn><ArrowUp /></ScrollBtn>
            <ScrollThumb />
            <ScrollBtn><ArrowDown /></ScrollBtn>
          </ChromeScroll>
        </GzFrame>
      </PopWindow>

      <PopWindow $x={958} $y={109} $w={906} $h={806}>
        <PopTitle $active>
          <Cube />
          rqt - sim-clk5rh081yxz - Google Chrome
          <PopControls $dark><WinMin /><WinMax /><WinClose /></PopControls>
        </PopTitle>
        <PopAddress>
          <Lock />
          <PopUrl><Url path="/robomaker/viewer?region=ap-southeast-1#sim-clk5r..." /></PopUrl>
          <Clip />
        </PopAddress>
        <PopHeader $pad={26}>
          <HeadBrand $w={357}>AWS RoboMaker</HeadBrand>
          <HeadSim>sim-clk5rh081yxz</HeadSim>
        </PopHeader>
        <RqtFrame>
          <RqtInner>
            <RqtMenu>
              <span><Mn>F</Mn>ile</span>
              <span><Mn>P</Mn>lugins</span>
              <span><Mn>R</Mn>unning</span>
              <span>P<Mn>e</Mn>rspectives</span>
              <span><Mn>H</Mn>elp</span>
            </RqtMenu>
            <DockTitle>
              <ImgIcon />
              <DockLabel>Image View</DockLabel>
              <DockTools>
                <DButton>D</DButton>
                <Refresh s={22} />
                <HelpIcon />
                <DockGlyph $ml={15} $bold>-</DockGlyph>
                <DockGlyph $ml={13}>O</DockGlyph>
                <DockGlyph $ml={10}>X</DockGlyph>
              </DockTools>
            </DockTitle>
            <CtlRow $mt={1}>
              <QtButton $w={216}><ComboCaret /></QtButton>
              <QtIconBtn $w={34} $ml={8}><Refresh s={18} /></QtIconBtn>
              <QtButton $w={50} $ml={9} />
              <SpinBox $w={59} $ml={8} $arrow={17}>
                <SpinValue>0</SpinValue>
                <SpinArrows><SpinUp /><SpinDown $dim /></SpinArrows>
              </SpinBox>
              <Check $ml={8} />
              <SpinBox $w={105} $ml={9} $arrow={17}>
                <SpinValue>10.00m</SpinValue>
                <SpinArrows><SpinUp /><SpinDown /></SpinArrows>
              </SpinBox>
              <QtIconBtn $w={34} $ml={9}><SaveIcon /></QtIconBtn>
            </CtlRow>
            <CtlRow $mt={8}>
              <Check />
              <LineInput $w={201} $ml={9} />
              <Check $ml={8} />
              <QtLabel $ml={7} $w={114}>Smooth scaling</QtLabel>
              <QtButton $w={50} $ml={18} />
              <QtLabel $ml={29} $w={26}>0°</QtLabel>
              <QtButton $w={50} />
              <QtButton $w={102} $ml={8}>Gray<ComboCaret /></QtButton>
            </CtlRow>
            <ImageArea />
          </RqtInner>
        </RqtFrame>
      </PopWindow>
    </Screen>
  );
}
